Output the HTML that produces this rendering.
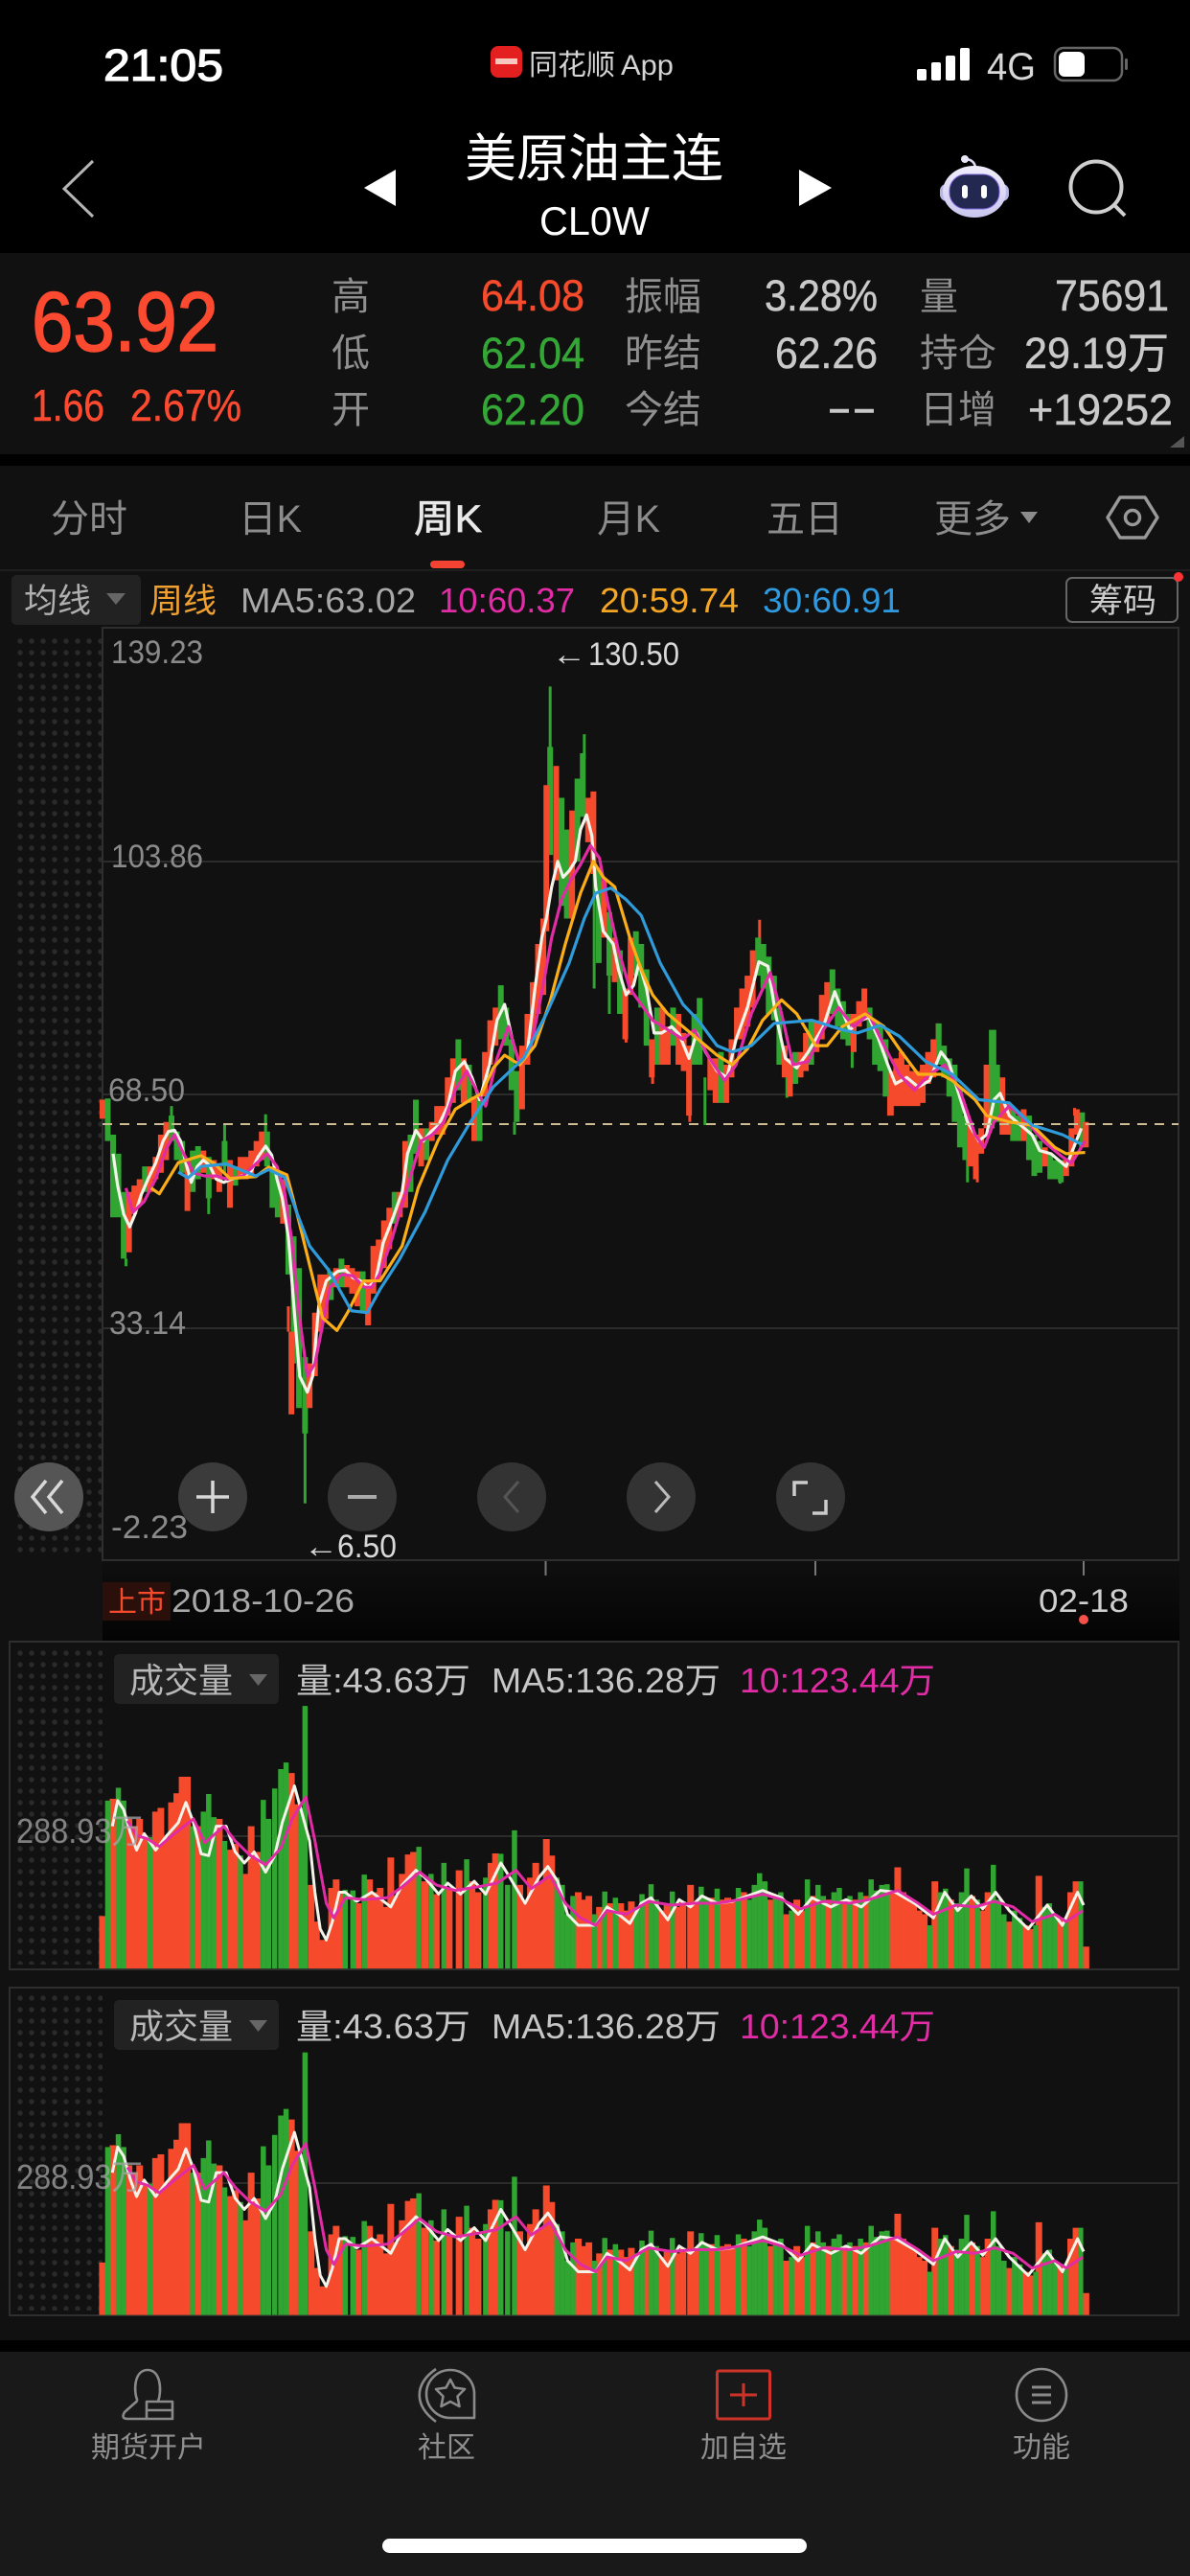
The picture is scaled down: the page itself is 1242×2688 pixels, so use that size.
<!DOCTYPE html>
<html><head><meta charset="utf-8"><title>美原油主连</title>
<style>
html,body{margin:0;padding:0;background:#000;width:1242px;height:2688px;overflow:hidden}
svg{display:block;font-family:"Liberation Sans","Noto Sans CJK SC",sans-serif}
.ns{vector-effect:non-scaling-stroke;fill:none}
.l{fill:#8f8f8f;font-size:40px}
.v{fill:#c9c9c9;font-size:45px;stroke:#c9c9c9;stroke-width:.5px}
.t{fill:#8c8c8c;font-size:40px}
.p{fill:#8a8a8a;font-size:34px}
.m{font-size:36px}
.n{fill:#8f8f8f;font-size:30px}
.q{font-size:45px;stroke-width:.5px}
</style></head><body>
<svg width="1242" height="2688" viewBox="0 0 1242 2688" xmlns="http://www.w3.org/2000/svg">
<defs>
<pattern id="d" x="16" y="4" width="12" height="12" patternUnits="userSpaceOnUse"><circle cx="5" cy="5" r="2.7" fill="#2a2a2a"/></pattern>
<linearGradient id="ax" x1="0" y1="0" x2="0" y2="1"><stop offset="0" stop-color="#0f0f0f"/><stop offset="1" stop-color="#040404"/></linearGradient>
<linearGradient id="hl" x1="0" y1="0" x2="0" y2="1"><stop offset="0" stop-color="#f0eefb"/><stop offset="1" stop-color="#c9c6ee"/></linearGradient>
<g id="vol">
<g transform="translate(0,1500) scale(.792,.3827)">
<path class="ns" stroke="#f54a2c" stroke-width="7" d="M135 1305V1448M149 985V1448M170 1040V1448M177 1060V1448M184 1040V1448M191 1090V1448M205 1020V1448M212 1010V1448M219 1090V1448M226 995V1448M233 970V1448M240 925V1448M247 925V1448M261 1060V1448M289 1040V1448M303 1124V1448M310 1108V1448M324 1190V1448M331 1060V1448M339 1130V1448M384 915V1448M390 1000V1448M410 1220V1448M417 1320V1448M424 1370V1448M431 1370V1448M437 1228V1448M443 1205V1448M449 1240V1448M472 1270V1448M487 1205V1448M494 1240V1448M501 1228V1448M508 1280V1448M515 1145V1448M522 1250V1448M530 1190V1448M538 1137V1448M545 1130V1448M560 1210V1448M575 1245V1448M592 1230V1448M605 1180V1448M622 1210V1448M630 1240V1448M647 1160V1448M653 1134V1448M685 1220V1448M692 1270V1448M699 1200V1448M706 1160V1448M713 1210V1448M720 1095V1448M727 1140V1448M762 1240V1448M769 1260V1448M776 1250V1448M790 1280V1448M804 1270V1448M818 1270V1448M825 1290V1448M832 1265V1448M853 1260V1448M872 1290V1448M879 1270V1448M893 1280V1448M900 1265V1448M910 1220V1448M917 1270V1448M938 1255V1448M952 1260V1448M959 1255V1448M966 1260V1448M980 1240V1448M1015 1260V1448M1036 1300V1448M1050 1260V1448M1057 1290V1448M1071 1250V1448M1092 1260V1448M1113 1260V1448M1127 1260V1448M1141 1250V1448M1176 1240V1448M1183 1172V1448M1190 1240V1448M1197 1260V1448M1204 1270V1448M1211 1290V1448M1218 1300V1448M1232 1210V1448M1253 1260V1448M1281 1250V1448M1295 1290V1448M1302 1240V1448M1330 1320V1448M1351 1330V1448M1358 1340V1448M1369 1195V1448M1397 1310V1448M1411 1240V1448M1418 1210V1448M1431 1388V1448"/>
<path class="ns" stroke="#31a531" stroke-width="5.5" d="M142 990V1448M156 955V1448M163 990V1448M198 1090V1448M254 1060V1448M268 1020V1448M275 972V1448M282 1035V1448M296 1100V1448M317 1140V1448M347 988V1448M354 1040V1448M362 957V1448M370 904V1448M377 886V1448M396 1010V1448M402 732V1448M455 1233V1448M465 1235V1448M480 1192V1448M552 1116V1448M568 1190V1448M585 1160V1448M615 1150V1448M640 1200V1448M660 1135V1448M669 1220V1448M678 1071V1448M734 1200V1448M741 1220V1448M748 1300V1448M755 1250V1448M783 1300V1448M797 1238V1448M811 1255V1448M839 1280V1448M846 1245V1448M858 1218V1448M865 1260V1448M886 1238V1448M924 1225V1448M931 1255V1448M945 1230V1448M973 1228V1448M987 1260V1448M994 1220V1448M1001 1188V1448M1008 1210V1448M1022 1250V1448M1029 1240V1448M1043 1290V1448M1064 1205V1448M1078 1220V1448M1085 1250V1448M1099 1240V1448M1106 1228V1448M1120 1250V1448M1134 1240V1448M1148 1205V1448M1155 1235V1448M1162 1220V1448M1169 1218V1448M1225 1330V1448M1239 1240V1448M1246 1230V1448M1260 1270V1448M1267 1240V1448M1274 1175V1448M1288 1260V1448M1309 1165V1448M1316 1260V1448M1323 1300V1448M1337 1290V1448M1344 1310V1448M1365 1330V1448M1376 1280V1448M1383 1270V1448M1390 1300V1448M1404 1310V1448M1424 1210V1448"/>
<polyline class="ns" stroke="#f3f3ea" stroke-width="3" stroke-linejoin="round" points="148,1060 155,990 163,1015 172,1080 180,1125 190,1080 205,1125 220,1085 235,1050 245,995 255,1050 265,1135 275,1140 285,1060 298,1060 310,1130 322,1160 335,1130 350,1185 362,1140 372,1050 388,950 400,1040 408,1100 415,1240 422,1340 430,1370 438,1320 447,1240 455,1240 470,1265 490,1240 515,1280 530,1220 548,1180 560,1200 578,1245 590,1215 607,1245 625,1210 640,1245 660,1160 672,1200 692,1270 710,1200 722,1170 735,1210 748,1300 762,1330 785,1330 800,1280 815,1300 830,1325 845,1270 858,1255 880,1315 895,1260 910,1280 925,1250 945,1270 965,1265 985,1250 1005,1235 1030,1255 1052,1300 1070,1255 1095,1280 1115,1260 1135,1280 1160,1235 1180,1240 1205,1270 1230,1310 1245,1240 1262,1290 1280,1250 1295,1285 1312,1240 1330,1290 1355,1340 1380,1275 1400,1330 1420,1240 1428,1275"/>
<polyline class="ns" stroke="#e12ca5" stroke-width="3" stroke-linejoin="round" points="168,1045 180,1085 195,1095 210,1115 230,1080 255,1040 270,1105 295,1060 310,1100 330,1140 350,1165 370,1120 385,1040 403,980 415,1100 430,1270 440,1310 455,1255 480,1260 510,1255 530,1225 553,1185 575,1220 600,1235 630,1225 655,1215 680,1180 700,1230 725,1195 745,1270 765,1310 785,1330 800,1290 825,1300 855,1265 885,1275 915,1270 945,1270 975,1260 1005,1245 1030,1260 1055,1285 1085,1265 1120,1270 1145,1260 1183,1235 1210,1270 1230,1300 1260,1275 1285,1280 1310,1265 1335,1280 1360,1320 1390,1300 1405,1320 1427,1290"/>
</g>
</g>
</defs>
<!-- backgrounds -->
<rect width="1242" height="2688" fill="#000"/>
<rect y="264" width="1242" height="210" fill="#111"/>
<rect y="486" width="1242" height="1956" fill="#111"/>
<rect y="2454" width="1242" height="234" fill="#191919"/>
<!-- status bar -->
<text x="108" y="84" font-size="46" fill="#fff" stroke="#fff" stroke-width="1.3" textLength="125" lengthAdjust="spacingAndGlyphs">21:05</text>
<rect x="512" y="48" width="33" height="33" rx="8" fill="#e3201f"/>
<rect x="517" y="61" width="23" height="6" fill="#f6c8c0"/>
<text x="552" y="78" font-size="30" fill="#d4d4d4">同花顺</text>
<text x="648" y="78" font-size="30" fill="#d4d4d4" textLength="55" lengthAdjust="spacingAndGlyphs">App</text>
<g fill="#fff"><rect x="957" y="72" width="10" height="12" rx="2"/><rect x="972" y="65" width="10" height="19" rx="2"/><rect x="987" y="58" width="10" height="26" rx="2"/><rect x="1002" y="50" width="10" height="34" rx="2"/></g>
<text x="1030" y="83" font-size="40" fill="#d8d8d8" textLength="51" lengthAdjust="spacingAndGlyphs">4G</text>
<rect x="1101" y="50" width="70" height="34" rx="9" fill="none" stroke="#666" stroke-width="2.5"/>
<rect x="1105" y="54" width="27" height="26" rx="6" fill="#fff"/>
<rect x="1174" y="61" width="3" height="12" rx="1.5" fill="#666"/>
<!-- nav -->
<polyline points="97,168 67,197 97,226" fill="none" stroke="#b5b5b5" stroke-width="3"/>
<polygon points="380,196 413,177 413,215" fill="#fff"/>
<polygon points="834,177 868,196 834,215" fill="#fff"/>
<text x="485" y="184" font-size="54" fill="#fff">美原油主连</text>
<text x="563" y="245" font-size="42" fill="#fff" textLength="115" lengthAdjust="spacingAndGlyphs">CL0W</text>
<path d="M1007 166Q1016 166 1018 174" fill="none" stroke="#dcdcf5" stroke-width="2.5"/>
<circle cx="1007" cy="166" r="4" fill="#e8e8f8"/>
<rect x="981" y="192" width="72" height="18" rx="7" fill="#b9b6e6"/>
<ellipse cx="1017" cy="200" rx="33" ry="27" fill="url(#hl)"/>
<rect x="991" y="182" width="52" height="36" rx="17" fill="#232850" stroke="#7a62d8" stroke-width="1"/>
<rect x="1004" y="193" width="6" height="14" rx="3" fill="#fff"/>
<rect x="1024" y="193" width="6" height="14" rx="3" fill="#fff"/>
<circle cx="1144" cy="195" r="26.5" fill="none" stroke="#cfcfcf" stroke-width="4"/>
<line x1="1163" y1="214" x2="1174" y2="225" stroke="#cfcfcf" stroke-width="4"/>
<!-- quote -->
<text x="33" y="366" font-size="88" fill="#fb4a30" stroke="#fb4a30" stroke-width="1.6" textLength="195" lengthAdjust="spacingAndGlyphs">63.92</text>
<text x="33" y="439" font-size="46" fill="#fb4a30" stroke="#fb4a30" stroke-width=".5" textLength="76" lengthAdjust="spacingAndGlyphs">1.66</text>
<text x="136" y="439" font-size="46" fill="#fb4a30" stroke="#fb4a30" stroke-width=".5" textLength="116" lengthAdjust="spacingAndGlyphs">2.67%</text>
<text class="l" x="346" y="323">高</text><text class="l" x="346" y="382">低</text><text class="l" x="346" y="441">开</text>
<text class="q" x="502" y="324" fill="#f54a2c" stroke="#f54a2c" textLength="108" lengthAdjust="spacingAndGlyphs">64.08</text>
<text class="q" x="502" y="384" fill="#34a636" stroke="#34a636" textLength="108" lengthAdjust="spacingAndGlyphs">62.04</text>
<text class="q" x="502" y="443" fill="#34a636" stroke="#34a636" textLength="108" lengthAdjust="spacingAndGlyphs">62.20</text>
<text class="l" x="652" y="323">振幅</text><text class="l" x="652" y="382">昨结</text><text class="l" x="652" y="441">今结</text>
<text class="v" x="798" y="324" textLength="118" lengthAdjust="spacingAndGlyphs">3.28%</text>
<text class="v" x="809" y="384" textLength="107" lengthAdjust="spacingAndGlyphs">62.26</text>
<text class="v" x="863" y="441" textLength="52" lengthAdjust="spacingAndGlyphs">--</text>
<text class="l" x="960" y="323">量</text><text class="l" x="960" y="382">持仓</text><text class="l" x="960" y="441">日增</text>
<text class="v" x="1101" y="324" textLength="119" lengthAdjust="spacingAndGlyphs">75691</text>
<text class="v" x="1069" y="384" textLength="151" lengthAdjust="spacingAndGlyphs">29.19万</text>
<text class="v" x="1073" y="443" textLength="151" lengthAdjust="spacingAndGlyphs">+19252</text>
<polygon points="1221,467 1236,467 1236,455" fill="#555"/>
<!-- tabs -->
<text class="t" x="53" y="555">分时</text>
<text class="t" x="249" y="555" textLength="66" lengthAdjust="spacingAndGlyphs">日K</text>
<text x="432" y="555" font-size="40" fill="#e8e8e8" stroke="#e8e8e8" stroke-width=".7" textLength="71" lengthAdjust="spacingAndGlyphs">周K</text>
<text class="t" x="623" y="555" textLength="66" lengthAdjust="spacingAndGlyphs">月K</text>
<text class="t" x="800" y="555">五日</text>
<text class="t" x="975" y="555">更多</text>
<polygon points="1065,534 1083,534 1074,546" fill="#8c8c8c"/>
<polygon points="1169,519 1195,519 1208,540 1195,561 1169,561 1156,540" fill="none" stroke="#999" stroke-width="3.5" stroke-linejoin="round"/>
<circle cx="1182" cy="540" r="7.5" fill="none" stroke="#999" stroke-width="3.5"/>
<rect x="449" y="585" width="36" height="8" rx="4" fill="#f44332"/>
<rect y="594" width="1242" height="2" fill="#1e1e1e"/>
<!-- legend -->
<rect x="12" y="600" width="135" height="52" rx="5" fill="#222"/>
<text x="25" y="639" font-size="35" fill="#b0b0b0">均线</text>
<polygon points="111,619 131,619 121,631" fill="#666"/>
<text x="156" y="639" font-size="35" fill="#f0a030">周线</text>
<text x="251" y="639" font-size="36" fill="#a8a8a8" textLength="183" lengthAdjust="spacingAndGlyphs">MA5:63.02</text>
<text x="458" y="639" font-size="36" fill="#e12ca5" textLength="142" lengthAdjust="spacingAndGlyphs">10:60.37</text>
<text x="626" y="639" font-size="36" fill="#f5a623" textLength="145" lengthAdjust="spacingAndGlyphs">20:59.74</text>
<text x="796" y="639" font-size="36" fill="#2f9ae0" textLength="144" lengthAdjust="spacingAndGlyphs">30:60.91</text>
<rect x="1113" y="603" width="116" height="46" rx="6" fill="none" stroke="#666" stroke-width="2"/>
<text x="1137" y="639" font-size="35" fill="#ccc">筹码</text>
<circle cx="1230" cy="602" r="5" fill="#f33"/>
<!-- main chart -->
<rect x="16" y="660" width="91" height="960" fill="url(#d)"/>
<rect x="107" y="655" width="1123" height="973" fill="none" stroke="#2e2e2e" stroke-width="2"/>
<g stroke="#2c2c2c" stroke-width="2"><line x1="107" y1="899" x2="1230" y2="899"/><line x1="107" y1="1142" x2="1230" y2="1142"/><line x1="107" y1="1386" x2="1230" y2="1386"/></g>
<g transform="translate(0,660) scale(.792,.6633)">
<path class="ns" stroke="#31a531" stroke-width="3" d="M166 985V997M226 745V790M296 775V850M275 880V915M350 758V810M433 1000V1020M402 1200V1370M678 770V790M725 85V190M770 160V200M783 380V560M803 540V600M929 700V775M1123 640V685M1275 820V865M1397 850V867M1037 690V732M1311 625V700"/>
<path class="ns" stroke="#f54a2c" stroke-width="3" d="M1001 452V490M909 700V770M1235 615V650M1288 840V865M860 680V710M825 600V645M487 1060V1088M1171 730V760M1416 748V760M605 640V670M380 1060V1100"/>
<path class="ns" stroke="#31a531" stroke-width="6" d="M142 733V800M149 790V920M156 820V920M163 880V985M191 840V880M226 760V800M233 785V830M240 800V850M254 815V880M261 808V860M275 825V890M296 800V840M310 840V870M352 785V840M359 840V905M366 850V920M380 900V1010M387 950V1150M394 1000V1220M402 1140V1260M436 1005V1050M450 985V1030M478 1005V1070M520 880V930M541 790V880M548 735V820M562 780V830M604 640V720M618 680V740M632 730V800M660 555V640M667 590V650M674 640V720M681 690V770M725 180V350M740 260V430M747 310V450M761 230V360M768 190V290M789 370V520M803 440V540M817 500V600M838 470V540M845 490V590M852 530V650M866 590V680M887 590V650M915 600V680M922 575V680M950 660V740M999 480V540M1006 490V560M1013 510V600M1020 540V610M1027 590V680M1048 660V710M1069 610V680M1097 530V600M1104 560V620M1111 580V640M1118 600V650M1146 590V640M1153 610V680M1160 620V690M1167 640V730M1237 615V680M1244 650V700M1251 670V730M1258 680V770M1265 720V810M1272 760V830M1307 625V780M1314 680V770M1335 750V800M1342 760V800M1356 760V830M1363 790V855M1370 800V850M1384 820V860M1391 830V860M1398 830V865M1426 755V810"/>
<path class="ns" stroke="#f54a2c" stroke-width="6" d="M135 735V765M170 880V975M177 870V915M184 860V900M198 840V880M205 825V860M212 790V850M219 770V830M247 830V910M268 815V850M282 830V860M289 840V880M303 830V905M317 825V860M324 825V860M331 815V855M338 800V840M345 785V830M373 860V930M384 1100V1230M408 1150V1220M415 1070V1170M422 1010V1100M429 1010V1080M443 1000V1030M457 995V1030M464 1000V1040M471 1005V1060M485 1020V1090M492 965V1040M499 955V1020M506 925V1000M513 905V970M527 880V920M534 800V905M555 780V840M569 770V800M576 745V790M583 745V790M590 700V760M597 670V740M611 670V740M625 730V800M639 660V730M646 610V680M653 590V650M688 650V750M695 600V680M702 550V640M709 490V600M716 450V570M720 240V470M733 210V390M754 280V450M775 260V330M782 250V380M796 390V480M810 480V550M824 560V640M831 480V570M859 640V700M873 590V680M880 620V680M894 600V680M901 630V690M908 650V760M936 670V720M943 670V740M957 680V740M964 640V700M971 590V640M978 560V640M985 540V620M992 500V590M1034 650V700M1041 670V730M1055 660V700M1062 630V690M1076 610V660M1083 570V640M1090 550V620M1125 600V660M1132 580V620M1139 560V610M1174 690V760M1181 670V745M1188 660V745M1195 680V745M1202 690V745M1209 690V745M1216 680V740M1223 660V710M1230 640V700M1279 770V840M1286 790V860M1293 780V820M1300 680V780M1321 700V790M1328 740V790M1349 750V800M1377 810V840M1405 830V855M1412 780V840M1419 750V790M1431 770V810"/>
<polyline class="ns" stroke="#f3f3ea" stroke-width="3.2" stroke-linejoin="round" points="149,820 155,870 163,915 171,935 178,915 186,885 195,860 205,835 215,800 222,785 230,783 238,800 245,835 252,865 260,840 268,830 276,838 285,860 295,865 305,860 318,855 330,850 340,825 350,808 358,822 365,860 372,890 380,950 388,1070 395,1170 405,1195 412,1170 420,1060 430,1020 445,1005 455,1003 465,1015 475,1020 485,1030 495,1020 505,960 518,920 530,880 537,820 548,783 558,800 568,785 578,775 590,745 600,690 612,675 622,700 632,735 645,680 655,610 665,585 675,640 685,680 695,660 705,560 714,480 720,450 727,400 735,360 742,385 750,375 758,360 765,310 773,287 780,320 785,400 795,470 808,490 815,530 825,570 835,555 842,520 852,560 862,630 872,630 885,620 895,632 908,670 918,630 930,660 945,690 958,700 970,640 985,590 1000,518 1012,525 1022,600 1035,670 1050,685 1065,660 1085,620 1100,565 1108,590 1120,625 1135,610 1145,605 1158,640 1170,680 1180,710 1195,700 1210,715 1225,705 1240,660 1250,675 1262,720 1275,770 1290,800 1300,790 1310,735 1318,725 1330,760 1345,775 1360,790 1370,815 1385,820 1405,840 1415,810 1425,780"/>
<polyline class="ns" stroke="#e12ca5" stroke-width="3.2" stroke-linejoin="round" points="166,874 175,912 190,895 205,860 220,810 230,790 240,815 255,850 270,855 285,855 300,860 320,855 338,835 352,820 365,840 375,880 385,960 395,1080 405,1170 415,1150 425,1090 435,1030 450,1010 465,1012 480,1030 490,1030 500,1010 515,960 530,900 545,840 555,800 570,790 585,770 600,720 615,690 630,725 640,745 655,670 670,620 685,680 700,650 715,560 727,480 740,420 752,390 765,365 778,335 790,355 800,420 815,500 830,560 845,585 860,610 880,625 900,640 915,625 935,670 955,705 970,680 990,600 1015,535 1030,600 1045,680 1065,675 1085,625 1105,590 1125,620 1145,600 1165,650 1185,695 1205,720 1225,695 1245,680 1265,720 1285,790 1297,810 1310,770 1330,745 1350,765 1375,800 1400,825 1412,835 1430,800"/>
<polyline class="ns" stroke="#fbae17" stroke-width="3.2" stroke-linejoin="round" points="199,874 210,883 235,834 265,823 282,835 303,859 337,856 354,841 378,853 391,912 408,995 425,1078 444,1098 458,1070 479,1020 501,1020 530,965 551,874 577,800 600,750 620,735 635,725 650,685 665,665 685,680 705,650 725,580 745,490 765,410 782,360 795,385 810,400 830,480 845,530 860,570 880,600 900,620 920,640 945,665 965,680 985,655 1005,610 1030,578 1050,600 1075,650 1090,650 1110,620 1140,600 1165,620 1185,655 1210,695 1240,695 1255,705 1285,735 1300,760 1330,770 1360,775 1390,810 1405,820 1430,818"/>
<polyline class="ns" stroke="#2f9bdb" stroke-width="3.2" stroke-linejoin="round" points="235,849 248,858 265,840 298,836 337,855 354,845 375,857 391,912 408,965 433,1003 463,1067 484,1070 501,1033 526,987 560,912 590,830 620,770 650,715 690,670 720,600 750,520 770,450 785,410 805,402 825,420 845,445 870,520 900,585 920,610 945,650 965,660 990,650 1020,615 1070,610 1110,625 1130,630 1160,618 1185,635 1220,675 1255,695 1290,735 1330,740 1360,775 1400,790 1425,805"/>
</g>
<line x1="107" y1="1173" x2="1230" y2="1173" stroke="#cdbb92" stroke-width="2" stroke-dasharray="10 8"/>
<text class="p" x="116" y="692" textLength="96" lengthAdjust="spacingAndGlyphs">139.23</text>
<text class="p" x="116" y="905" textLength="96" lengthAdjust="spacingAndGlyphs">103.86</text>
<text class="p" x="113" y="1149" textLength="80" lengthAdjust="spacingAndGlyphs">68.50</text>
<text class="p" x="114" y="1392" textLength="80" lengthAdjust="spacingAndGlyphs">33.14</text>
<text class="p" x="116" y="1605" textLength="80" lengthAdjust="spacingAndGlyphs">-2.23</text>
<text x="576" y="694" font-size="34" fill="#d8d8d8" textLength="36" lengthAdjust="spacingAndGlyphs">←</text>
<text x="614" y="694" font-size="34" fill="#d8d8d8" textLength="95" lengthAdjust="spacingAndGlyphs">130.50</text>
<text x="317" y="1625" font-size="34" fill="#d8d8d8" textLength="36" lengthAdjust="spacingAndGlyphs">←</text>
<text x="352" y="1625" font-size="34" fill="#d8d8d8" textLength="62" lengthAdjust="spacingAndGlyphs">6.50</text>
<!-- round buttons -->
<g>
<circle cx="51" cy="1562" r="36" fill="#555"/>
<circle cx="222" cy="1562" r="36" fill="#3b3b3b"/>
<circle cx="378" cy="1562" r="36" fill="#333"/>
<circle cx="534" cy="1562" r="36" fill="#333"/>
<circle cx="690" cy="1562" r="36" fill="#333"/>
<circle cx="846" cy="1562" r="36" fill="#333"/>
<g fill="none" stroke="#d8d8d8" stroke-width="3.5">
<polyline points="48,1545 34,1562 48,1579"/><polyline points="65,1545 51,1562 65,1579"/>
<path d="M205 1562H239M222 1545V1579"/>
</g>
<path d="M363 1562H393" stroke="#aaa" stroke-width="4"/>
<polyline points="541,1546 527,1562 541,1578" fill="none" stroke="#555" stroke-width="3"/>
<polyline points="684,1546 698,1562 684,1578" fill="none" stroke="#bbb" stroke-width="3"/>
<path d="M843 1547H829V1561M862 1565V1579H848" fill="none" stroke="#ccc" stroke-width="3.5"/>
</g>
<!-- x axis -->
<rect x="107" y="1629" width="1124" height="84" fill="url(#ax)"/>
<g stroke="#777" stroke-width="2"><line x1="569.5" y1="1629" x2="569.5" y2="1644"/><line x1="851" y1="1629" x2="851" y2="1644"/><line x1="1131" y1="1629" x2="1131" y2="1644"/></g>
<rect x="107" y="1651" width="71" height="40" fill="#2b0f0b"/>
<text x="113" y="1682" font-size="30" fill="#f54a2c">上市</text>
<text x="179" y="1682" font-size="34" fill="#a8a8a8" textLength="191" lengthAdjust="spacingAndGlyphs">2018-10-26</text>
<text x="1084" y="1682" font-size="34" fill="#cfcfcf" textLength="94" lengthAdjust="spacingAndGlyphs">02-18</text>
<circle cx="1131" cy="1690" r="5" fill="#f5504a"/>
<!-- volume 1 -->
<rect x="16" y="1720" width="91" height="330" fill="url(#d)"/>
<rect x="10" y="1713" width="1220" height="342" fill="none" stroke="#2e2e2e" stroke-width="2"/>
<line x1="107" y1="1916" x2="1230" y2="1916" stroke="#2c2c2c" stroke-width="2"/>
<use href="#vol"/>
<rect x="119" y="1726" width="172" height="52" rx="5" fill="#222"/>
<text x="135" y="1766" font-size="36" fill="#b8b8b8">成交量</text>
<polygon points="260,1747 279,1747 269.5,1759" fill="#666"/>
<text class="m" x="309" y="1766" fill="#c6c6c6" textLength="182" lengthAdjust="spacingAndGlyphs">量:43.63万</text>
<text class="m" x="513" y="1766" fill="#c6c6c6" textLength="239" lengthAdjust="spacingAndGlyphs">MA5:136.28万</text>
<text class="m" x="772" y="1766" fill="#e12ca5" textLength="204" lengthAdjust="spacingAndGlyphs">10:123.44万</text>
<text x="17" y="1923" font-size="36" fill="#a5a5a5" fill-opacity=".75" textLength="132" lengthAdjust="spacingAndGlyphs">288.93万</text>
<!-- volume 2 -->
<rect x="16" y="2081" width="91" height="330" fill="url(#d)"/>
<rect x="10" y="2074" width="1220" height="342" fill="none" stroke="#2e2e2e" stroke-width="2"/>
<line x1="107" y1="2278" x2="1230" y2="2278" stroke="#2c2c2c" stroke-width="2"/>
<use href="#vol" y="361.5"/>
<rect x="119" y="2087" width="172" height="52" rx="5" fill="#222"/>
<text x="135" y="2127" font-size="36" fill="#b8b8b8">成交量</text>
<polygon points="260,2108 279,2108 269.5,2120" fill="#666"/>
<text class="m" x="309" y="2127" fill="#c6c6c6" textLength="182" lengthAdjust="spacingAndGlyphs">量:43.63万</text>
<text class="m" x="513" y="2127" fill="#c6c6c6" textLength="239" lengthAdjust="spacingAndGlyphs">MA5:136.28万</text>
<text class="m" x="772" y="2127" fill="#e12ca5" textLength="204" lengthAdjust="spacingAndGlyphs">10:123.44万</text>
<text x="17" y="2284" font-size="36" fill="#a5a5a5" fill-opacity=".75" textLength="132" lengthAdjust="spacingAndGlyphs">288.93万</text>
<!-- bottom nav -->
<g fill="none" stroke="#8a8a8a" stroke-width="2.6" stroke-linejoin="round">
<path d="M143.5 2505C139 2495 140 2473 154 2473C168 2473 169 2495 165 2506"/>
<path d="M143.5 2505L130 2517Q126 2524 133 2524H153"/>
<rect x="153" y="2506" width="27" height="18"/><path d="M153 2515H180"/>
<path d="M455 2472C432 2488 432 2510 455 2527"/>
<path d="M495 2523V2498A25 25 0 1 0 470 2523Z"/>
<polygon points="470,2483 474.5,2491.5 485,2493 477.5,2500.5 479.5,2511 470,2506 460.5,2511 462.5,2500.5 455,2493 465.5,2491.5"/>
<ellipse cx="1087" cy="2499" rx="26" ry="27"/>
<path d="M1077 2491H1097M1077 2499H1097M1077 2507H1097" stroke-width="3"/>
</g>
<rect x="748.5" y="2474" width="55" height="50" rx="2" fill="none" stroke="#cf3228" stroke-width="3"/>
<path d="M762 2499H790M776 2487V2511" stroke="#cf3228" stroke-width="3"/>
<text class="n" x="95" y="2564">期货开户</text>
<text class="n" x="436" y="2564">社区</text>
<text class="n" x="731" y="2564">加自选</text>
<text class="n" x="1057" y="2564">功能</text>
<rect x="399" y="2649" width="443" height="15" rx="7.5" fill="#fff"/>
</svg>
</body></html>
